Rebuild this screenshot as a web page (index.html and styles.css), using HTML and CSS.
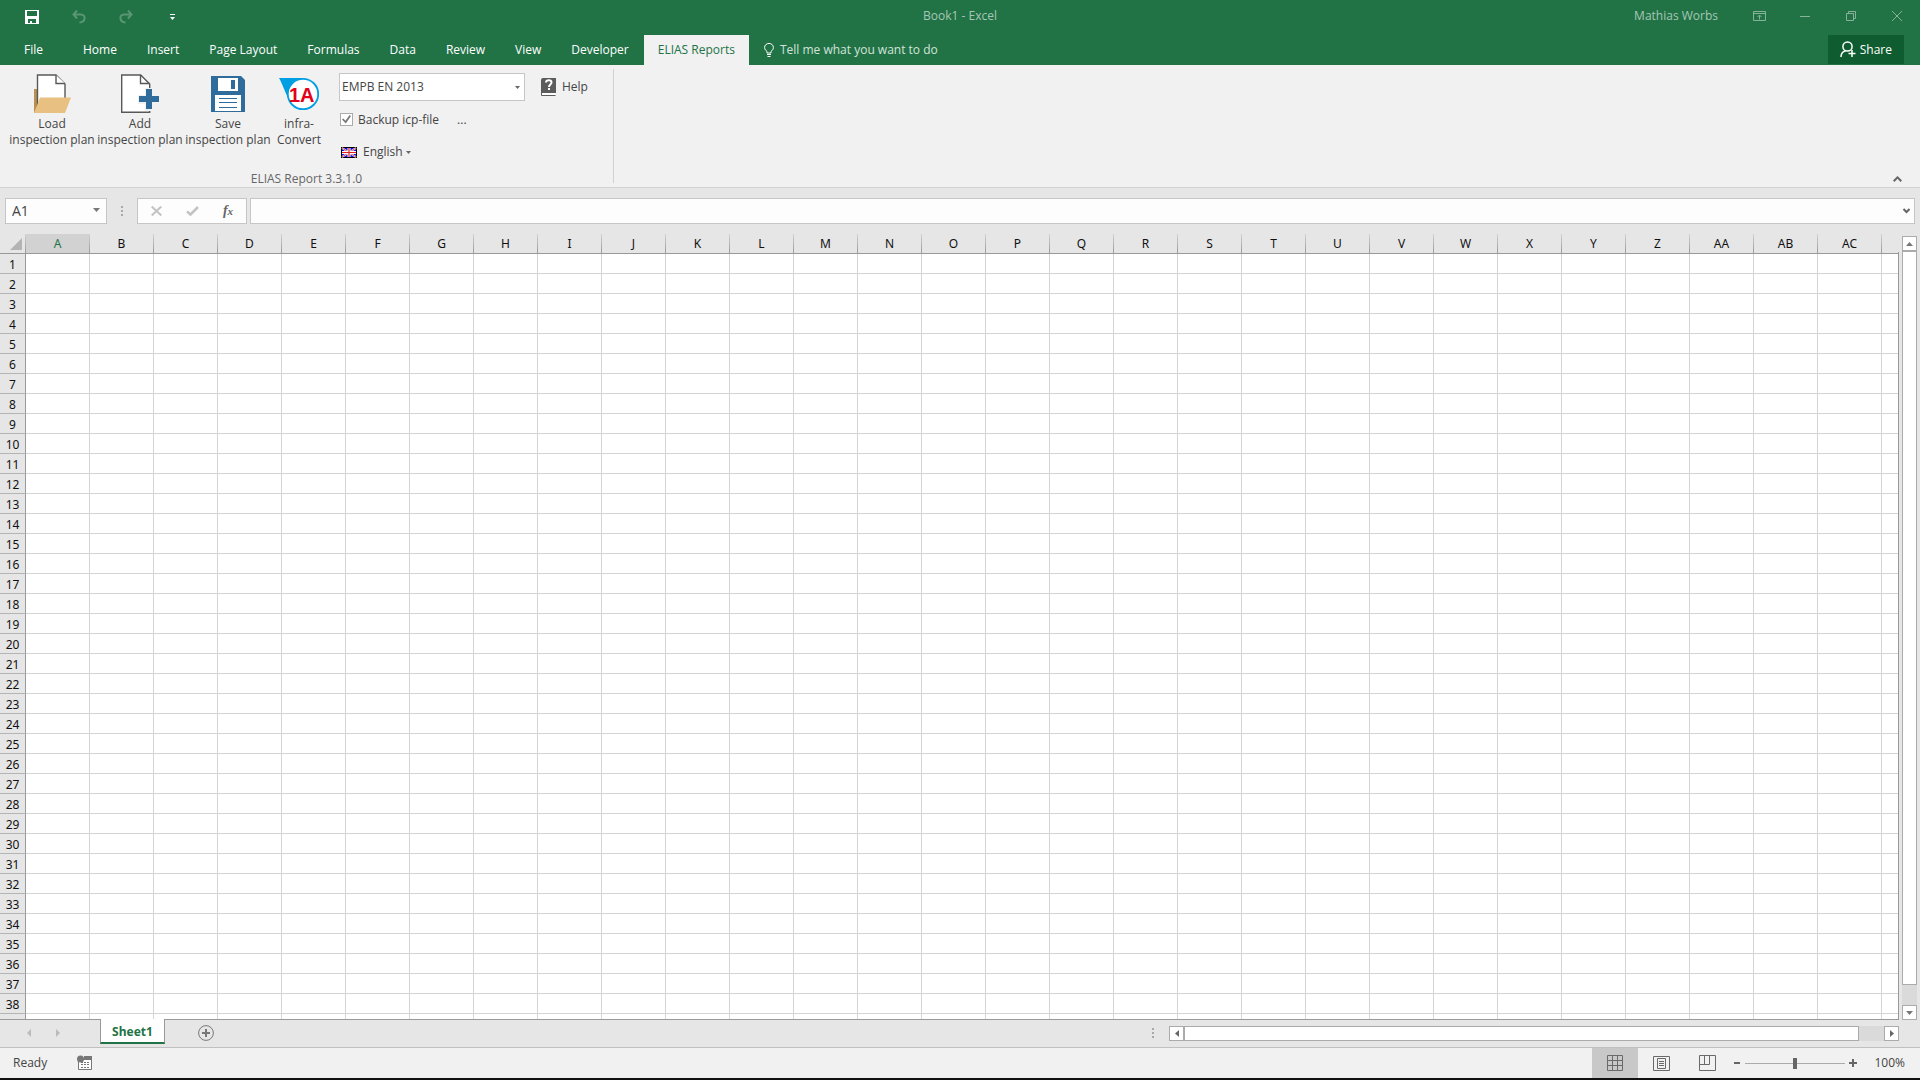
FILE: index.html
```html
<!DOCTYPE html>
<html lang="en">
<head>
  <meta charset="UTF-8" />
  <meta name="viewport" content="width=device-width, initial-scale=1.0"/>
  <title>Book1 - Excel</title>
  <link rel="stylesheet" href="styles.css">
</head>
<body>
  <header class="titlebar">
    <div class="quick">
      <button aria-label="Save">
        <svg width="14" height="14" viewBox="0 0 14 14"><path d="M0 0h14v14H0z M2 1v5h10V1z M3 9v4h2v-2h2v2h4V9z" fill="#fff" fill-rule="evenodd"/></svg>
      </button>
      <button aria-label="Undo" class="dim">
        <svg width="14" height="14" viewBox="0 0 14 14" fill="none" stroke="#fff" stroke-width="2"><path d="M5 0.500L1.500 4.500 5 8.500M2 4.500h7c5 0 5 7.500-1.500 8"/></svg>
      </button>
      <button aria-label="Redo" class="dim">
        <svg width="14" height="14" viewBox="0 0 14 14" fill="none" stroke="#fff" stroke-width="2"><path d="M9 0.500l3.500 4L9 8.500M12 4.500H5c-5 0-5 7.500 1.500 8"/></svg>
      </button>
      <button aria-label="Customize Quick Access Toolbar">
        <svg width="5" height="6" viewBox="0 0 5 6" fill="#fff"><path d="M0 0h5v1H0zM0 3h5L2.500 6z"/></svg>
      </button>
    </div>
    <div class="title">Book1 - Excel</div>
    <div class="window-buttons">
      <span class="user">Mathias Worbs</span>
      <button aria-label="Ribbon Display Options">
        <svg width="13" height="10" viewBox="0 0 13 10" fill="none" stroke="#fff"><path d="M.5.5h12v9H.5zM.5 2.500h12M6.500 8.500v-4M4.500 6l2-2 2 2"/></svg>
      </button>
      <button aria-label="Minimize">
        <svg width="10" height="10" viewBox="0 0 10 10" stroke="#fff"><path d="M0 5.500h10"/></svg>
      </button>
      <button aria-label="Restore">
        <svg width="10" height="10" viewBox="0 0 10 10" fill="none" stroke="#fff"><path d="M.5 2.500h7v7h-7zM2.500 2.500v-2h7v7h-2"/></svg>
      </button>
      <button aria-label="Close">
        <svg width="10" height="10" viewBox="0 0 10 10" stroke="#fff"><path d="M0 0l10 10M10 0L0 10"/></svg>
      </button>
    </div>
  </header>

  <nav class="tabs">
    <button class="file">File</button>
    <button>Home</button>
    <button>Insert</button>
    <button>Page Layout</button>
    <button>Formulas</button>
    <button>Data</button>
    <button>Review</button>
    <button>View</button>
    <button>Developer</button>
    <button class="active">ELIAS Reports</button>
    <button class="tell">
      <svg width="10" height="14" viewBox="0 0 10 14" fill="none" stroke="#fff"><path d="M3 10V8.500C2 7.500.6 6.500.6 4.500a4.300 4 0 0 1 8.800 0c0 2-1.400 3-2.400 4V10zM3 11.500h4M3.500 13.500h3"/></svg>
      Tell me what you want to do
    </button>
    <button class="share">
      <svg width="16" height="17" viewBox="0 0 16 17" fill="none" stroke="#fff" stroke-width="1.500"><circle cx="7.500" cy="5.500" r="4.600"/><path d="M1 16c0-3.500 2-5.500 4.500-6M8.500 12.500h7M12 9v7"/></svg>
      Share
    </button>
  </nav>

  <section class="ribbon">
    <div class="group">
      <div class="tools">
        <button class="big">
          <svg width="38" height="40" viewBox="0 0 38 40"><path d="M1 15h6v24H1z" fill="#b9904f"/><path d="M4.500 1H23l9 9v24H4.500z" fill="#fff" stroke="#58585a" stroke-width="1.400"/><path d="M23 1v8.500h9" fill="#fff" stroke="#58585a" stroke-width="1.400"/><path d="M7 23.500h31L32 39H1z" fill="#e8c182"/></svg>
          <span>Load<br>inspection plan</span>
        </button>
        <button class="big">
          <svg width="38" height="40" viewBox="0 0 38 40"><path d="M.7 1h19l9 9v28.300H.7z" fill="#fff" stroke="#58585a" stroke-width="1.400"/><path d="M19.500 1v8.500h9" fill="none" stroke="#58585a" stroke-width="1.400"/><path d="M24 14h8.500v7H39v9h-6.500v7H24v-7h-7v-9h7z" fill="#f1f1f1"/><path d="M25 15h6v7h7v6h-7v7h-6v-7h-7v-6h7z" fill="#2f6c9c"/></svg>
          <span>Add<br>inspection plan</span>
        </button>
        <button class="big">
          <svg width="34" height="40" viewBox="0 0 34 40"><path d="M0 2h30l4 4v32H0z" fill="#2f6c9c"/><path d="M7 4h20v13H7z" fill="#fff"/><path d="M20 6h4v9h-4z" fill="#2f6c9c"/><path d="M4 21h26v16H4z" fill="#fff"/><path d="M8 24.500h18M8 28.500h18M8 33.500h18" stroke="#2f6c9c"/></svg>
          <span>Save<br>inspection plan</span>
        </button>
        <button class="big narrow">
          <svg width="40" height="40" viewBox="0 0 40 40"><path d="M0 4h25v28c-7 1-13-2-16-8C6 18 3 9 0 4z" fill="#009fe3"/><circle cx="24" cy="20" r="15.200" fill="#fff" stroke="#009fe3" stroke-width="1.800"/><text x="10" y="28" class="logo-text">1A</text></svg>
          <span>infra-<br>Convert</span>
        </button>
        <div class="options">
          <div class="combo">
            <select aria-label="Template"><option>EMPB EN 2013</option></select>
            <svg width="5" height="3" viewBox="0 0 5 3"><path d="M0 0h5L2.500 3z" fill="#666"/></svg>
          </div>
          <div class="backup">
            <input type="checkbox" id="backup" checked>
            <label for="backup">Backup icp-file</label>
            <button>...</button>
          </div>
          <button class="language">
            <svg class="flag" width="16" height="11" viewBox="0 0 16 11"><path d="M0 0h16v11H0z" fill="#000"/><path d="M1 1h14v9H1z" fill="#1010e0"/><path d="M1 1l14 9M15 1L1 10" stroke="#fff" stroke-width="1.800"/><path d="M1 1l14 9M15 1L1 10" stroke="#e02020" stroke-width=".8"/><path d="M8 1v9M1 5.500h14" stroke="#fff" stroke-width="3"/><path d="M8 1v9M1 5.500h14" stroke="#e02020" stroke-width="1.200"/></svg>
            English
            <svg class="arrow" width="5" height="3" viewBox="0 0 5 3"><path d="M0 0h5L2.500 3z" fill="#666"/></svg>
          </button>
        </div>
        <button class="help">
          <svg width="15" height="18" viewBox="0 0 15 18"><path d="M0 2a2 2 0 0 1 2-2h13v15H0z" fill="#5c5c5c"/><path d="M1 15h13.500v2.500H1z" fill="#fff"/><path d="M.5 14v3.500H14.500" fill="none" stroke="#5c5c5c"/><path d="M5 4.500C5.200 1.500 10.500 1.600 10.500 4.500 10.500 6.500 8 6.500 8 9" fill="none" stroke="#fff" stroke-width="2"/><path d="M7 10h2v2H7z" fill="#fff"/></svg>
          Help
        </button>
      </div>
      <div class="group-name">ELIAS Report 3.3.1.0</div>
    </div>
    <button class="collapse" aria-label="Collapse the Ribbon">
      <svg width="9" height="6" viewBox="0 0 9 6" fill="none" stroke="#666" stroke-width="2"><path d="M.7 5.200l3.800-3.800 3.800 3.800"/></svg>
    </button>
  </section>

  <section class="formula-bar">
    <div class="name-box">
      <input type="text" aria-label="Name Box" value="A1">
      <button aria-label="Names"><svg width="7" height="4" viewBox="0 0 7 4"><path d="M0 0h7L3.500 4z" fill="#777"/></svg></button>
    </div>
    <span class="dots"></span>
    <div class="fx-box">
      <button aria-label="Cancel"><svg width="11" height="10" viewBox="0 0 11 10" stroke="#c3c3c3" stroke-width="2"><path d="M.7.5l9.600 9M10.300.5L.7 9.500"/></svg></button>
      <button aria-label="Enter"><svg width="13" height="10" viewBox="0 0 13 10" fill="none" stroke="#c3c3c3" stroke-width="2.500"><path d="M1 5.500l3.500 3L12 1"/></svg></button>
      <button aria-label="Insert Function" class="fx">f<small>x</small></button>
    </div>
    <div class="formula">
      <input type="text" aria-label="Formula Bar">
      <button aria-label="Expand Formula Bar"><svg width="7" height="6" viewBox="0 0 7 6" fill="none" stroke="#666" stroke-width="2"><path d="M.5 1l3 3 3-3"/></svg></button>
    </div>
  </section>

  <main class="sheet">
    <div class="grid-pane">
      <table class="grid">
        <thead><tr id="columns"><th class="corner"><svg width="12" height="12" viewBox="0 0 12 12"><path d="M12 0v12H0z" fill="#b4b4b4"/></svg></th></tr></thead>
        <tbody id="rows"></tbody>
      </table>
    </div>
    <div class="vscroll">
      <button aria-label="Scroll up"><svg width="7" height="4" viewBox="0 0 7 4"><path d="M0 4h7L3.500 0z" fill="#777"/></svg></button>
      <div class="track"><div class="thumb"></div></div>
      <button aria-label="Scroll down"><svg width="7" height="4" viewBox="0 0 7 4"><path d="M0 0h7L3.500 4z" fill="#777"/></svg></button>
    </div>
  </main>

  <section class="sheet-bar">
    <div class="sheet-nav">
      <button aria-label="Previous sheet"><svg width="4" height="8" viewBox="0 0 4 8"><path d="M4 0v8L0 4z" fill="#bbb"/></svg></button>
      <button aria-label="Next sheet"><svg width="4" height="8" viewBox="0 0 4 8"><path d="M0 0v8l4-4z" fill="#bbb"/></svg></button>
    </div>
    <button class="sheet-tab">Sheet1</button>
    <button class="add-sheet" aria-label="New sheet"><svg width="16" height="16" viewBox="0 0 16 16" fill="none" stroke="#777"><circle cx="8" cy="8" r="7.400"/><path d="M8 4v8M4 8h8" stroke-width="2"/></svg></button>
    <span class="dots"></span>
    <div class="hscroll">
      <button aria-label="Scroll left"><svg width="4" height="7" viewBox="0 0 4 7"><path d="M4 0v7L0 3.500z" fill="#666"/></svg></button>
      <div class="track"><div class="thumb"></div></div>
      <button aria-label="Scroll right"><svg width="4" height="7" viewBox="0 0 4 7"><path d="M0 0v7l4-3.500z" fill="#666"/></svg></button>
    </div>
  </section>

  <footer class="status">
    <span class="ready">Ready</span>
    <button class="macro" aria-label="Record Macro"><svg width="16" height="16" viewBox="0 0 16 16"><path d="M1.500 4.500h13v10h-13z" fill="#fff" stroke="#777"/><path d="M7 1h8v4H7z" fill="#777"/><circle cx="3.500" cy="4" r="3.500" fill="#777"/><path d="M4 7.500h9M4 9.500h9M4 12.500h9" stroke="#777" stroke-dasharray="2 1"/></svg></button>
    <div class="views">
      <button class="active" aria-label="Normal"><svg width="16" height="16" viewBox="0 0 16 16" fill="none" stroke="#6a6a6a"><path d="M.5.5h15v15H.5zM5.500 0v16M10.500 0v16M0 5.500h16M0 10.500h16"/></svg></button>
      <button aria-label="Page Layout"><svg width="17" height="15" viewBox="0 0 17 15" fill="none" stroke="#6a6a6a"><path d="M.5.5h16v14H.5zM4.500 2.500h8v10h-8zM6 5.500h5M6 7.500h5M6 9.500h5"/></svg></button>
      <button aria-label="Page Break Preview"><svg width="17" height="16" viewBox="0 0 17 16" fill="none" stroke="#6a6a6a"><path d="M.5.5h16v15H.5zM.5 9.500h10v-9M5.500.5v9"/></svg></button>
    </div>
    <button class="zoom-step" aria-label="Zoom out"><svg width="8" height="8" viewBox="0 0 8 8"><path d="M1 3h6v2H1z" fill="#666"/></svg></button>
    <input type="range" class="zoom" aria-label="Zoom" min="0" max="100" value="50">
    <button class="zoom-step" aria-label="Zoom in"><svg width="8" height="8" viewBox="0 0 8 8"><path d="M0 3h3V0h2v3h3v2H5v3H3V5H0z" fill="#666"/></svg></button>
    <button class="percent">100%</button>
  </footer>
  <div class="taskbar"></div>

  <script>
    // the last column and row are only partly in view and carry no label
    const columnCount = 30;
    const rowCount = 39;
    const columns = document.getElementById("columns");
    const rows = document.getElementById("rows");

    function columnName(index) {
      const letter = String.fromCharCode(65 + index % 26);
      return index < 26 ? letter : "A" + letter;
    }

    for (let i = 0; i < columnCount; i++) {
      const th = document.createElement("th");
      if (i < columnCount - 1) th.textContent = columnName(i);
      if (i === 0) th.className = "selected";
      columns.appendChild(th);
    }

    for (let r = 1; r <= rowCount; r++) {
      const tr = rows.insertRow();
      const th = document.createElement("th");
      if (r < rowCount) th.textContent = r;
      tr.appendChild(th);
      for (let c = 0; c < columnCount; c++) {
        tr.insertCell();
      }
    }
  </script>
</body>
</html>
```

FILE: styles.css
```css
* {
  box-sizing: border-box;
}

body {
  margin: 0;
  height: 100vh;
  display: flex;
  flex-direction: column;
  overflow: hidden;
  background-color: #e6e6e6;
  color: #444;
  font-family: "Open Sans", "Noto Sans", sans-serif;
  font-size: 12px;
  line-height: 16px;
}

button,
input,
select {
  font: inherit;
  color: inherit;
  background: none;
  border: none;
  padding: 0;
  margin: 0;
  border-radius: 0;
}

svg {
  display: block;
  flex: none;
}

/* title bar */
.titlebar {
  display: grid;
  grid-template-columns: 1fr auto 1fr;
  height: 35px;
  padding-bottom: 3px;
  background-color: #217346;
  color: #a6c7b5;
}

.quick,
.window-buttons {
  display: flex;
  align-items: center;
}

.quick {
  padding: 2px 0 0 8px;
}

.quick button {
  width: 47px;
  display: flex;
  justify-content: center;
}

.quick .dim {
  opacity: 0.25;
}

.title {
  align-self: center;
}

.window-buttons {
  justify-content: flex-end;
}

.window-buttons button {
  width: 46px;
  display: flex;
  justify-content: center;
  opacity: 0.45;
}

.user {
  margin-right: 18px;
}

/* ribbon tabs */
.tabs {
  display: flex;
  height: 30px;
  background-color: #217346;
  color: #fff;
}

.tabs button {
  padding: 0 15px;
}

.tabs .file {
  padding: 0 25px 0 24px;
}

.tabs .active {
  padding: 0 14px;
  background-color: #f1f1f1;
  color: #217346;
}

.tabs .tell {
  display: flex;
  align-items: center;
  gap: 6px;
  color: #d3e3da;
}

.tabs .share {
  display: flex;
  align-items: center;
  gap: 4px;
  height: 29px;
  margin-left: auto;
  margin-right: 16px;
  padding: 0 12px;
  background-color: #0e5c2f;
}

/* ribbon */
.ribbon {
  display: flex;
  justify-content: space-between;
  height: 123px;
  padding: 4px 0;
  background-color: #f1f1f1;
  border-bottom: 1px solid #d2d2d2;
}

.group {
  display: flex;
  flex-direction: column;
  justify-content: space-between;
  width: 614px;
  border-right: 1px solid #d2d2d2;
}

.tools {
  display: flex;
  padding: 4px 0 0 8px;
}

.big {
  width: 88px;
  display: flex;
  flex-direction: column;
  align-items: center;
  gap: 2px;
  padding-top: 1px;
  white-space: nowrap;
}

.narrow {
  width: 54px;
}

.logo-text {
  font: bold 20px "Liberation Sans", sans-serif;
  fill: #e2001a;
}

.options {
  width: 186px;
  margin-left: 13px;
  display: flex;
  flex-direction: column;
  align-items: flex-start;
}

.combo {
  display: flex;
  align-items: center;
  width: 100%;
  height: 28px;
  padding-right: 4px;
  border: 1px solid #c6c6c6;
  background-color: #fff;
}

.combo select {
  flex: 1;
  appearance: none;
  padding-left: 2px;
}

.backup {
  display: flex;
  align-items: center;
  height: 37px;
  padding-left: 1px;
}

.backup input {
  appearance: none;
  width: 13px;
  height: 13px;
  margin-right: 5px;
  border: 1px solid #ababab;
  background-color: #fff;
}

.backup input:checked::before {
  content: "";
  display: block;
  width: 9px;
  height: 9px;
  margin: 1px;
  background-color: #777;
  clip-path: polygon(0 50%, 15% 40%, 38% 65%, 85% 0, 100% 12%, 42% 95%);
}

.backup button {
  margin-left: 18px;
}

.language {
  display: flex;
  align-items: center;
  height: 28px;
  padding-left: 2px;
}

.flag {
  margin-right: 6px;
}

.arrow {
  margin-left: 3px;
}

.help {
  display: flex;
  align-items: center;
  align-self: flex-start;
  gap: 6px;
  height: 28px;
  margin-left: 16px;
}

.group-name {
  margin-bottom: -4px;
  text-align: center;
  color: #666;
}

.collapse {
  align-self: flex-end;
  margin-right: 18px;
  padding-bottom: 1px;
}

/* formula bar */
.formula-bar {
  display: flex;
  align-items: center;
  height: 46px;
  padding: 0 5px;
}

.name-box,
.fx-box,
.formula {
  display: flex;
  align-items: center;
  height: 26px;
  border: 1px solid #c6c6c6;
  background-color: #fdfdfd;
}

.name-box {
  width: 102px;
  padding: 0 6px;
}

.name-box input,
.formula input {
  flex: 1;
  min-width: 0;
  font-size: 14px;
}

.name-box button {
  padding-bottom: 3px;
}

.dots {
  width: 2px;
  height: 10px;
  background: repeating-linear-gradient(#a8a8a8 0 2px, transparent 2px 4px);
}

.formula-bar .dots {
  margin: 0 14px;
}

.fx-box {
  width: 110px;
  margin-right: 3px;
}

.fx-box button {
  flex: 1;
  display: flex;
  justify-content: center;
}

.fx-box .fx {
  font: italic bold 14px "Liberation Serif", serif;
  color: #666;
  align-items: baseline;
}

.fx small {
  font-size: 11px;
}

.formula {
  flex: 1;
  padding: 0 4px 0 8px;
}

/* sheet */
.sheet {
  flex: 1;
  min-height: 0;
  display: flex;
}

.grid-pane {
  flex: 1;
  min-width: 0;
  overflow: hidden;
  border-style: solid;
  border-width: 0 1px 1px 0;
  border-image: linear-gradient(#e6e6e6 19px, #999 19px) 1;
  background-color: #fff;
}

.grid {
  width: 1946px;
  table-layout: fixed;
  border-collapse: separate;
  border-spacing: 0;
  font-family: "Noto Sans", "Open Sans", sans-serif;
}

.grid th,
.grid td {
  height: 20px;
  padding: 0;
  border-right: 1px solid #d4d4d4;
  border-bottom: 1px solid #d4d4d4;
}

.grid th {
  font-weight: normal;
  color: #111;
  line-height: 16px;
  background-color: #e6e6e6;
}

.grid thead th {
  background-image: linear-gradient(#d0d0d0, #999);
  background-size: 1px 100%;
  background-position: right;
  background-repeat: no-repeat;
  background-origin: border-box;
  border-right-color: transparent;
  border-bottom-color: #999;
}

.grid thead .corner {
  width: 26px;
  padding: 1px 0 0 10px;
}

.grid tbody th {
  padding-top: 3px;
  border-right-color: #999;
  border-bottom-color: #b4b4b4;
}

.grid thead .selected {
  background-color: #d2d2d2;
  color: #217346;
}

/* scroll bars */
.vscroll {
  display: flex;
  flex-direction: column;
  width: 15px;
  margin: 2px 3px 0;
}

.vscroll button,
.hscroll button {
  display: flex;
  align-items: center;
  justify-content: center;
  width: 15px;
  height: 15px;
  border: 1px solid #ababab;
  background-color: #fff;
}

.track {
  flex: 1;
  background-color: #dadada;
}

.thumb {
  border: 1px solid #ababab;
  background-color: #fff;
}

.vscroll .thumb {
  height: calc(100% - 20px);
}

.hscroll .thumb {
  width: calc(100% - 25px);
  height: 15px;
}

/* sheet bar */
.sheet-bar {
  display: flex;
  align-items: center;
  height: 28px;
  padding-bottom: 1px;
  border-bottom: 1px solid #c0c0c0;
}

.sheet-nav {
  display: flex;
  gap: 25px;
  width: 100px;
  padding-left: 27px;
}

.sheet-tab {
  align-self: flex-start;
  width: 65px;
  height: 25px;
  margin-top: -1px;
  padding-top: 3px;
  border: 1px solid #999;
  border-top: none;
  border-bottom: 2px solid #217346;
  background-color: #fff;
  color: #217346;
  font-family: "Noto Sans", "Open Sans", sans-serif;
  font-weight: bold;
}

.add-sheet {
  margin-left: 33px;
}

.sheet-bar .dots {
  margin-left: auto;
  margin-right: 15px;
}

.hscroll {
  display: flex;
  width: 38%;
  margin-right: 21px;
}

/* status bar */
.status {
  display: flex;
  align-items: center;
  height: 30px;
  padding: 0 15px 0 13px;
  background-color: #f1f1f1;
}

.macro {
  margin-left: 30px;
}

.views {
  display: flex;
  align-self: stretch;
  margin-left: auto;
}

.views button {
  width: 46px;
  display: flex;
  align-items: center;
  justify-content: center;
}

.views .active {
  background-color: #c8c8c8;
}

.zoom {
  appearance: none;
  width: 100px;
  height: 11px;
  margin: 0 4px;
  background: linear-gradient(#ababab, #ababab) center / 100% 1px no-repeat;
}

.zoom::-webkit-slider-thumb {
  appearance: none;
  width: 4px;
  height: 11px;
  background-color: #666;
}

.views + .zoom-step {
  margin-left: 3px;
}

.percent {
  width: 48px;
  text-align: right;
}

.taskbar {
  height: 2px;
  background-color: #111;
}
```
